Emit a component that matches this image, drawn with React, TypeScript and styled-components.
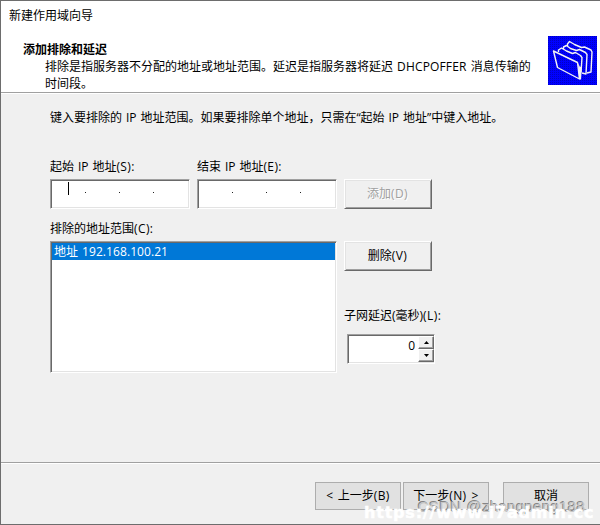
import React from 'react';
import styled, { createGlobalStyle } from 'styled-components';

const Global = createGlobalStyle`
  *, *::before, *::after { box-sizing: border-box; }
  body { margin: 0; overflow: hidden; }
`;

const Dialog = styled.main`
  position: relative;
  display: flex;
  flex-direction: column;
  width: 600px;
  height: 525px;
  border: 1px solid #6d6d6d;
  border-right: 0;
  background: #f0f0f0;
  color: #000;
  font: 12px/17px 'Open Sans', 'Noto Sans CJK SC', sans-serif;
  word-spacing: 0.8px;
  white-space: nowrap;
`;

const Header = styled.header`
  height: 93px;
  padding: 6px 3px 0 8px;
  background: #fff;
  border-bottom: 1px solid #fff;
  box-shadow: inset 0 -1px #a0a0a0;
`;

const WindowTitle = styled.div`
  height: 29px;
`;

const HeaderRow = styled.div`
  display: flex;
  justify-content: space-between;
`;

const HeaderText = styled.div`
  padding: 5px 0 0 14px;
`;

const StepTitle = styled.h1`
  margin: 0;
  font-size: 12px;
  font-weight: 700;
  line-height: 17px;
`;

const Description = styled.p`
  margin: 0 0 0 22px;
`;

const Latin = styled.span<{ $track?: number }>`
  letter-spacing: ${p => p.$track ?? 0.4}px;
`;

const FolderIcon = styled.svg`
  display: block;
  width: 49px;
  height: 49px;
`;

const Body = styled.section`
  flex: 1;
  padding: 15px 0 0 49px;
`;

const Hint = styled.p`
  margin: 0 0 32px;
`;

const Grid = styled.div`
  display: grid;
  grid-template-columns: 140px 140px 97px;
  column-gap: 7px;
`;

const Label = styled.label`
  display: block;
  height: 17px;
  margin-bottom: 4px;
`;

const Sunken = styled.div`
  background: #fff;
  border: 1px solid;
  border-color: #a0a0a0 #fff #fff #a0a0a0;
  box-shadow: inset 1px 1px #696969, inset -1px -1px #e3e3e3;
`;

const AddressField = styled(Sunken)`
  display: flex;
  height: 30px;
  padding: 12px 0 0 34px;
  gap: 33px;
`;

const Dot = styled.i`
  width: 1px;
  height: 1px;
  background: #222;
`;

const Caret = styled.i`
  width: 1px;
  height: 13px;
  margin: -10px -17px 0 -17px;
  background: #000;
`;

const ListColumn = styled.div`
  grid-column: 1 / 3;
  padding-top: 11px;
`;

const ListBox = styled(Sunken)`
  height: 132px;
  padding: 1px;
`;

const ListItem = styled.div`
  height: 17px;
  padding-left: 2px;
  background: #0078d7;
  color: #fff;
`;

const SideColumn = styled.div`
  padding-top: 32px;
`;

const ActionCell = styled.div`
  padding-top: 21px;
`;

const ClassicButton = styled.button`
  display: block;
  width: 88px;
  height: 30px;
  padding: 0 1px 1px 0;
  border: 1px solid;
  border-color: #fff #696969 #696969 #fff;
  box-shadow: inset 1px 1px #e3e3e3, inset -1px -1px #a0a0a0;
  background: #f0f0f0;
  color: #000;
  font: inherit;
  &:disabled { color: #a0a0a0; text-shadow: 1px 1px #fff; }
`;

const DelayLabel = styled(Label)`
  margin-top: 36px;
  margin-bottom: 10px;
`;

const Spinner = styled(Sunken)`
  display: flex;
  width: 88px;
  height: 30px;
  margin-left: 3px;
  padding: 1px 0 1px 1px;
`;

const SpinnerValue = styled.span`
  flex: 1;
  padding: 1px 3px 0 0;
  text-align: right;
`;

const SpinnerButtons = styled.div`
  width: 16px;
  display: grid;
  grid-template-rows: 13px 13px;
`;

const SpinnerButton = styled.button`
  display: grid;
  place-items: center;
  padding: 0;
  border: 1px solid;
  border-color: #fff #696969 #696969 #fff;
  box-shadow: inset -1px -1px #a0a0a0;
  background: #f0f0f0;
`;

const Footer = styled.footer`
  display: flex;
  height: 62px;
  padding: 19px 11px 0 0;
  justify-content: flex-end;
  border-top: 1px solid #a0a0a0;
  box-shadow: inset 0 1px #fff;
`;

const FooterButton = styled.button<{ $gap?: number }>`
  width: 86px;
  height: 28px;
  margin-left: ${p => p.$gap ?? 0}px;
  padding: 0 0 2px;
  border: 1px solid #adadad;
  background: #e1e1e1;
  font: inherit;
  word-spacing: 1.5px;
  color: #000;
`;

const AuthorMark = styled.div`
  position: absolute;
  left: 417px;
  top: 496px;
  font: 15px/20px 'Liberation Sans', sans-serif;
  letter-spacing: 0.3px;
  color: #c4c4c4;
  text-shadow: -1px -1px #858585;
`;

const SiteMark = styled.div`
  position: absolute;
  left: 363px;
  top: 502px;
  font: 700 16px/20px 'DejaVu Sans', sans-serif;
  letter-spacing: 0.8px;
  -webkit-text-stroke: 0.5px #fff;
  color: #fff;
`;

const Folders = () => (
  <FolderIcon viewBox="0 0 49 49" aria-hidden="true">
    <defs>
      <pattern id="weave" width="2" height="2" patternUnits="userSpaceOnUse">
        <rect width="2" height="2" fill="#0000ff" />
        <rect width="1" height="1" fill="#0000a0" />
      </pattern>
    </defs>
    <rect width="49" height="49" fill="#0000ff" />
    <rect width="49" height="49" fill="url(#weave)" fillOpacity="0.6" />
    <g fill="none" stroke="#f4f4f4" strokeWidth="1.4" strokeLinejoin="round">
      <path d="M19.500 10V8l2-2.500 5 3 7 3 3-.5 6.500 3 1 2-1 20-4 1" />
      <path d="M15.500 13V11l3-1.500 4 3 6 2 3-1 6 3 1.500 2-1 19.500-4-1" />
      <path d="M10.500 16V14l3-2 5 3 6 2.500 3-1 5 3 1.500 2-1 15" />
      <path d="M5.500 15l24 11.500 2 16.500L9.500 31.500z" />
    </g>
    <path d="M30 27l2 4 2-1-1 14-2-2z" fill="#f4f4f4" />
  </FolderIcon>
);

const AddressDots = () => (<><Dot /><Dot /><Dot /></>);

export default function App() {
  return (
    <>
      <Global />
      <Dialog>
        <Header>
          <WindowTitle>新建作用域向导</WindowTitle>
          <HeaderRow>
            <HeaderText>
              <StepTitle>添加排除和延迟</StepTitle>
              <Description>
                排除是指服务器不分配的地址或地址范围。延迟是指服务器将延迟<Latin $track={0.15}> DHCPOFFER </Latin>消息传输的<br />时间段。
              </Description>
            </HeaderText>
            <Folders />
          </HeaderRow>
        </Header>
        <Body>
          <Hint>键入要排除的 IP 地址范围。如果要排除单个地址，只需在“起始 IP 地址”中键入地址。</Hint>
          <Grid>
            <div>
              <Label>起始 IP 地址<Latin>(S):</Latin></Label>
              <AddressField><Caret /><AddressDots /></AddressField>
            </div>
            <div>
              <Label>结束 IP 地址<Latin>(E):</Latin></Label>
              <AddressField><AddressDots /></AddressField>
            </div>
            <ActionCell><ClassicButton disabled>添加<Latin>(D)</Latin></ClassicButton></ActionCell>
            <ListColumn>
              <Label>排除的地址范围<Latin>(C):</Latin></Label>
              <ListBox><ListItem>地址<Latin $track={0.08}> 192.168.100.21</Latin></ListItem></ListBox>
            </ListColumn>
            <SideColumn>
              <ClassicButton>删除<Latin>(V)</Latin></ClassicButton>
              <DelayLabel>子网延迟(毫秒)<Latin>(L):</Latin></DelayLabel>
              <Spinner>
                <SpinnerValue>0</SpinnerValue>
                <SpinnerButtons>
                  <SpinnerButton aria-label="增加"><svg width="5" height="3"><path d="M0 3 2.500 0 5 3z" /></svg></SpinnerButton>
                  <SpinnerButton aria-label="减少"><svg width="5" height="3"><path d="M0 0 2.500 3 5 0z" /></svg></SpinnerButton>
                </SpinnerButtons>
              </Spinner>
            </SideColumn>
          </Grid>
        </Body>
        <Footer>
          <FooterButton>&lt; 上一步<Latin>(B)</Latin></FooterButton>
          <FooterButton $gap={2}>下一步<Latin>(N) &gt;</Latin></FooterButton>
          <FooterButton $gap={14}>取消</FooterButton>
        </Footer>
        <AuthorMark>CSDN @zhangpeng188</AuthorMark>
        <SiteMark>https://www.i7admin.cc</SiteMark>
      </Dialog>
    </>
  );
}
